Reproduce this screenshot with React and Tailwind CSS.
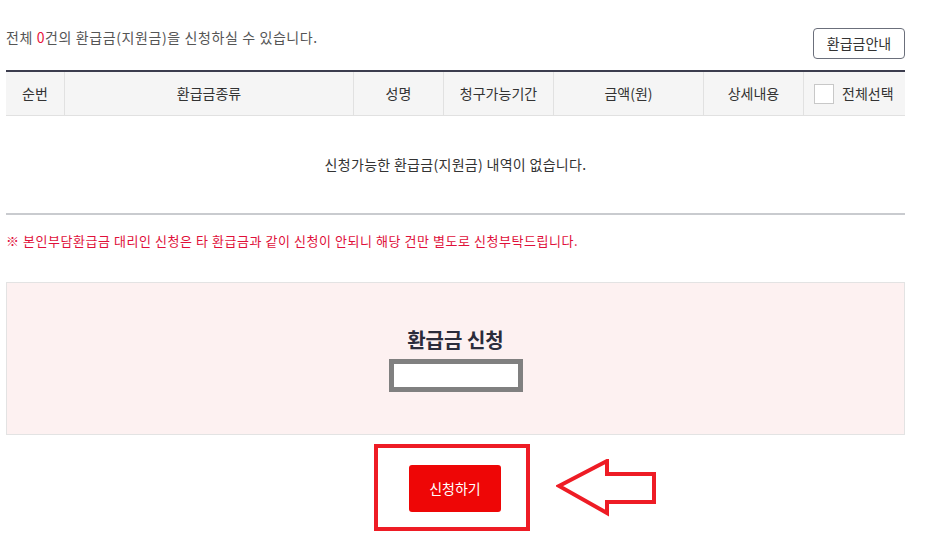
const FONT = { fontFamily: '"Noto Sans CJK KR", "Noto Sans", sans-serif' }

const columns = [
  { label: '순번', w: 'w-[59px]' },
  { label: '환급금종류', w: 'w-[289px]' },
  { label: '성명', w: 'w-[90px]' },
  { label: '청구가능기간', w: 'w-[110px]' },
  { label: '금액(원)', w: 'w-[150px]' },
  { label: '상세내용', w: 'w-[100px]' },
]

function ArrowLeft() {
  return (
    <svg width="104" height="58" viewBox="0 0 104 58" className="block" aria-hidden="true">
      <polygon
        points="3,27 51,2 51,15 98,15 98,43 51,43 51,54"
        fill="none"
        stroke="#ee1c25"
        strokeWidth="4"
        strokeLinejoin="miter"
      />
    </svg>
  )
}

export default function App() {
  return (
    <div className="min-h-[535px] w-[938px] bg-white pl-[6px] text-[#333]" style={FONT}>
      <div className="w-[899px]">
        {/* top summary */}
        <div className="flex items-end justify-between pt-[28px]">
          <p className="-mt-[2px] self-start text-[14px] leading-[22px] tracking-[0.6px] text-[#555]">
            전체 <span className="text-[#e8123c]">0</span>건의 환급금(지원금)을 신청하실 수 있습니다.
          </p>
          <button className="h-[31px] w-[92px] rounded-[4px] border border-[#6b6f7b] bg-white text-[14px] text-[#333]">
            환급금안내
          </button>
        </div>

        {/* table */}
        <div className="mt-[11px] border-t-2 border-[#3c3d4e]">
          <div className="flex h-[44px] border-b border-[#e1e1e1] bg-[#f5f5f5] text-[14px] text-[#333]">
            {columns.map((c) => (
              <div key={c.label} className={`${c.w} flex items-center justify-center border-r border-[#e1e1e1]`}>
                {c.label}
              </div>
            ))}
            <div className="flex flex-1 items-center gap-[8px] pl-[10px]">
              <span className="h-[20px] w-[20px] border border-[#c8c8c8] bg-white" />
              <span>전체선택</span>
            </div>
          </div>
          <div className="flex h-[99px] items-center justify-center border-b-2 border-[#c9cbcf] text-[14px] tracking-[0.3px] text-[#333]">
            신청가능한 환급금(지원금) 내역이 없습니다.
          </div>
        </div>

        {/* notice */}
        <p className="mt-[16px] text-[13px] leading-[20px] tracking-[0.55px] text-[#e0103a]">
          ※ 본인부담환급금 대리인 신청은 타 환급금과 같이 신청이 안되니 해당 건만 별도로 신청부탁드립니다.
        </p>

        {/* apply box */}
        <div className="mt-[31px] flex h-[153px] flex-col items-center border border-[#e3e3e3] bg-[#fdf1f1] pt-[44px]">
          <h2 className="text-[20px] font-bold leading-[26px] text-[#2b2c3b]">환급금 신청</h2>
          <div className="mt-[6px] h-[33px] w-[134px] border-[5px] border-[#808080] bg-white" />
        </div>

        {/* action */}
        <div className="relative mt-[9px] flex pl-[368px]">
          <div className="flex h-[87px] w-[156px] items-start border-4 border-[#ee1c25] pl-[31px] pt-[17px]">
            <button className="h-[47px] w-[92px] rounded-[3px] bg-[#ee0606] text-[14px] text-white">
              신청하기
            </button>
          </div>
          <div className="absolute left-[550px] top-[15px]">
            <ArrowLeft />
          </div>
        </div>
      </div>
    </div>
  )
}
